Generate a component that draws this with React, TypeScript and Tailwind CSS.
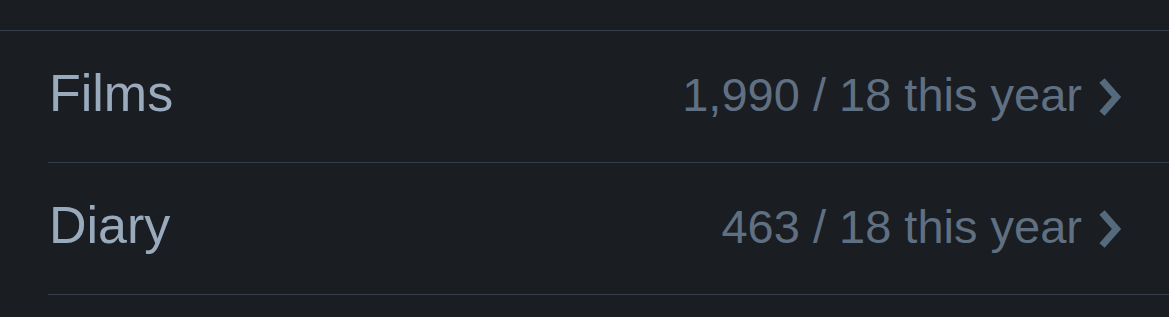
import React from "react";

function Chevron() {
  return (
    <svg width="26" height="40" viewBox="0 0 26 40" className="mt-[1px] shrink-0">
      <path d="M5 3.5 L19.5 20 L5 36.5" fill="none" stroke="#566a7e" strokeWidth="7" strokeLinejoin="miter" strokeLinecap="butt" />
    </svg>
  );
}

function Row({ label, value }: { label: string; value: string }) {
  return (
    <div className="pl-[48px]">
      <div className="flex h-[132px] items-center justify-between border-b border-[#363e49] pr-[46px]">
        <span className="mb-[7px] pl-[1px] text-[52px] leading-none text-[#9aaabd]">{label}</span>
        <div className="flex items-center gap-[15px]">
          <span className="mb-[4px] text-[47px] leading-none text-[#607083]">{value}</span>
          <Chevron />
        </div>
      </div>
    </div>
  );
}

export default function App() {
  return (
    <div
      className="h-[317px] w-[1169px] overflow-hidden bg-[#1a1d22]"
      style={{ fontFamily: '"Liberation Sans", Arial, sans-serif' }}
    >
      <div className="h-[30px]" />
      <div className="border-t border-[#363e49]">
        <Row label="Films" value="1,990 / 18 this year" />
        <Row label="Diary" value="463 / 18 this year" />
      </div>
    </div>
  );
}
